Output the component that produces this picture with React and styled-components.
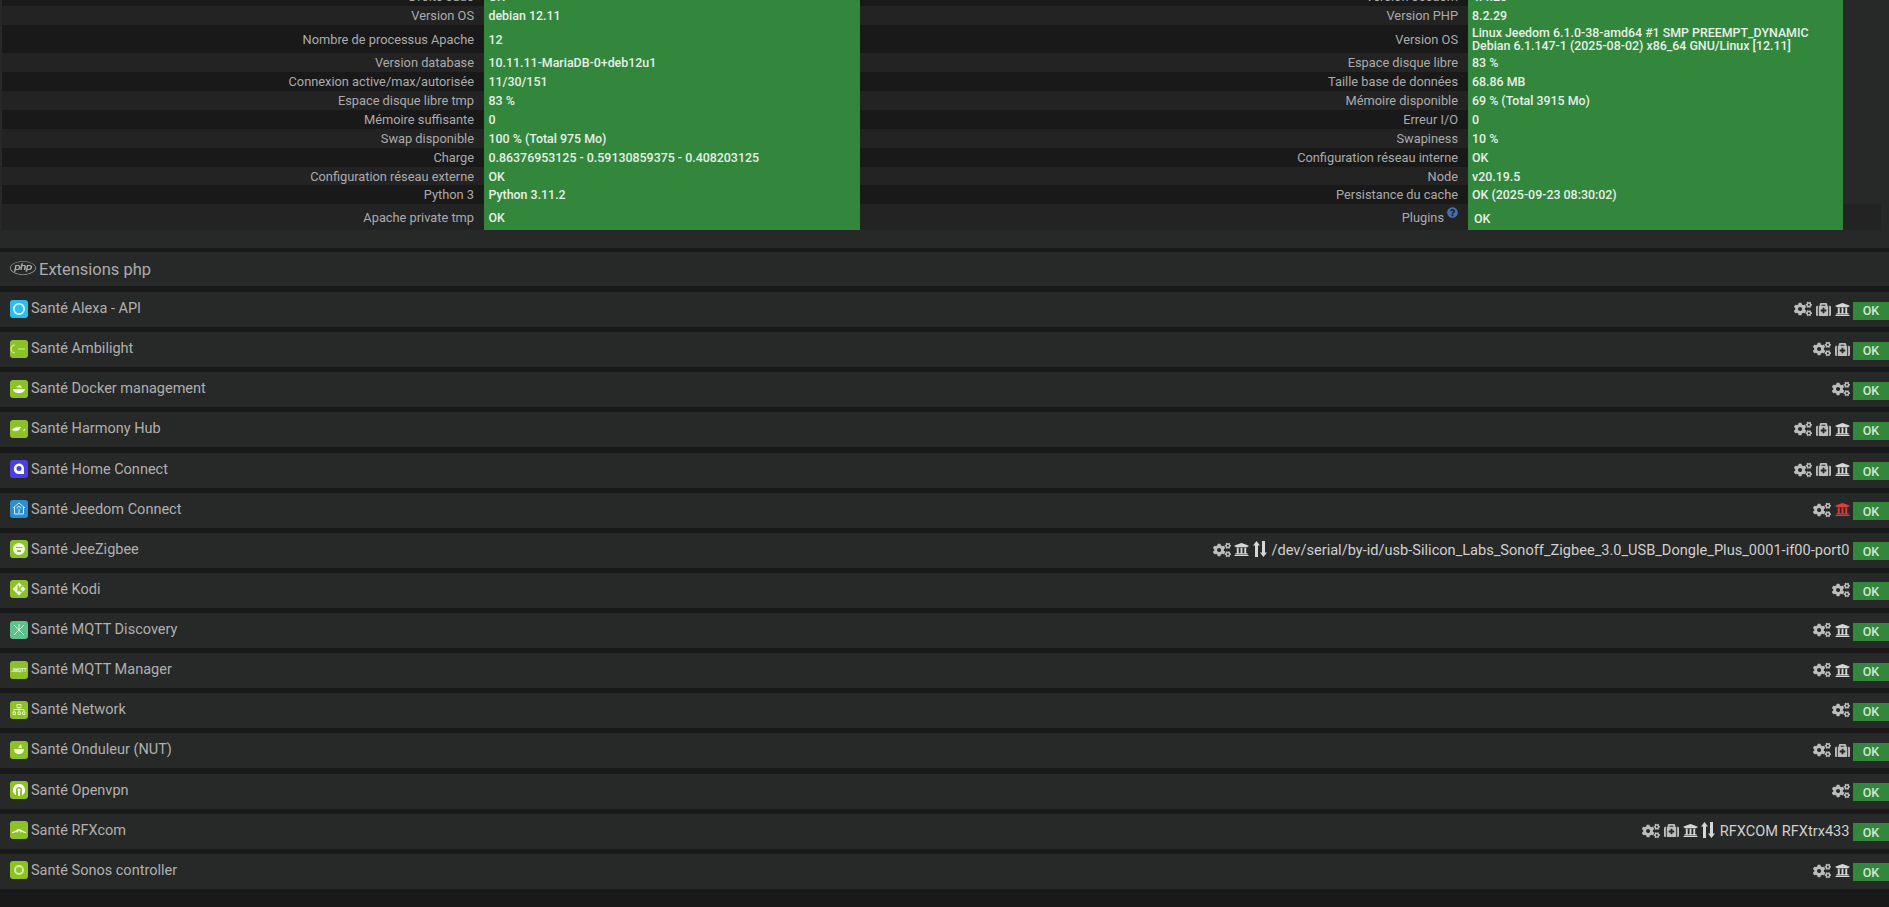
import React from "react";
import styled, { createGlobalStyle } from "styled-components";
import { FaCogs, FaMedkit, FaUniversity, FaPhp, FaQuestionCircle } from "react-icons/fa";

const Global = createGlobalStyle`
  html, body { margin: 0; padding: 0; background: #191919; }
  body { font-family: Roboto, "Liberation Sans", sans-serif; height: 907px; overflow: hidden; }
`;

const Page = styled.div`
  height: 907px;
  overflow: hidden;
  background: #191919;
  display: flex;
  flex-direction: column;
`;

// the first row of the table is scrolled out of the top of the page
const TopPanel = styled.div`
  flex: none;
  height: 261px;
  margin-top: -13px;
  margin-bottom: 4px;
  padding-left: 2px;
  box-sizing: border-box;
  background: #272928;
`;

const Line = styled.div`
  display: grid;
  grid-template-columns: 482px 376px 608px 375px ${(p) => (p.$last ? "38px" : "")};
  width: ${(p) => (p.$last ? 1879 : 1841)}px;
  height: ${(p) => p.$height}px;
  background: ${(p) => (p.$odd ? "#191919" : "#232323")};
`;

const Label = styled.div`
  display: flex;
  align-items: center;
  justify-content: flex-end;
  padding-right: 10px;
  color: #ababab;
  font-size: 12.8px;
`;

const Value = styled.div`
  display: flex;
  align-items: center;
  background: #32873d;
  color: #e8f0e8;
  font-size: 12.4px;
  font-weight: 500;
  line-height: 13px;
  white-space: pre-line;
  padding-left: ${(p) => p.$pad}px;
  padding-top: ${(p) => p.$top || 0}px;
  box-sizing: border-box;
`;

const Help = styled.span`
  display: inline-flex;
  color: #4170b4;
  font-size: 11px;
  margin-left: 3px;
  margin-bottom: 9px;
`;

const Section = styled.div`
  flex: none;
  height: 34px;
  margin-bottom: 6px;
  background: #272928;
  display: flex;
  align-items: center;
  gap: 3px;
  padding-left: 10px;
  padding-top: 1px;
  box-sizing: border-box;
  color: #ababab;
  font-size: 16.5px;
`;

const PhpIcon = styled(FaPhp)`
  margin-bottom: 4px;
`;

const Rows = styled.div`
  display: flex;
  flex-direction: column;
  gap: 5.14px;
`;

const Row = styled.div`
  flex: none;
  height: 35px;
  background: #272928;
  display: flex;
  align-items: center;
  padding-left: 10px;
`;

const Logo = styled.svg`
  width: 18px;
  height: 18px;
  flex: none;
  margin-right: 3px;
  margin-bottom: 2px;
`;

const Name = styled.div`
  flex: 1;
  color: #b0b0b0;
  font-size: 14.5px;
  margin-bottom: 2px;
`;

const Tools = styled.div`
  display: flex;
  align-items: center;
  gap: 3.6px;
  margin-right: 3.5px;
  margin-bottom: 1px;
`;

const Tool = styled.span`
  display: inline-flex;
  color: ${(p) => p.$color || "#bcbcbc"};
  font-size: ${(p) => p.$size || 15}px;
`;

const ArrowsIcon = styled.svg`
  width: 14px;
  height: 16px;
  margin-bottom: 1px;
`;

const Port = styled.span`
  color: #cfcfcf;
  font-size: 14.6px;
  margin-left: 1px;
`;

const Ok = styled.div`
  flex: none;
  width: 36px;
  height: 18px;
  margin-top: 2px;
  background: #32873d;
  color: #d4e6d4;
  font-size: 12.5px;
  font-weight: 500;
  display: flex;
  align-items: center;
  justify-content: center;
`;

const lines = [
  { h: 19, a: "Droits sudo", b: "OK", c: "Version Jeedom", d: "4.4.20" },
  { h: 19, a: "Version OS", b: "debian 12.11", c: "Version PHP", d: "8.2.29" },
  {
    h: 28,
    a: "Nombre de processus Apache",
    b: "12",
    c: "Version OS",
    d: "Linux Jeedom 6.1.0-38-amd64 #1 SMP PREEMPT_DYNAMIC\nDebian 6.1.147-1 (2025-08-02) x86_64 GNU/Linux [12.11]",
  },
  { h: 19, a: "Version database", b: "10.11.11-MariaDB-0+deb12u1", c: "Espace disque libre", d: "83 %" },
  { h: 19, a: "Connexion active/max/autorisée", b: "11/30/151", c: "Taille base de données", d: "68.86 MB" },
  { h: 19, a: "Espace disque libre tmp", b: "83 %", c: "Mémoire disponible", d: "69 % (Total 3915 Mo)" },
  { h: 19, a: "Mémoire suffisante", b: "0", c: "Erreur I/O", d: "0" },
  { h: 19, a: "Swap disponible", b: "100 % (Total 975 Mo)", c: "Swapiness", d: "10 %" },
  { h: 19, a: "Charge", b: "0.86376953125 - 0.59130859375 - 0.408203125", c: "Configuration réseau interne", d: "OK" },
  { h: 18, a: "Configuration réseau externe", b: "OK", c: "Node", d: "v20.19.5" },
  { h: 19, a: "Python 3", b: "Python 3.11.2", c: "Persistance du cache", d: "OK (2025-09-23 08:30:02)" },
  { h: 26, a: "Apache private tmp", b: "OK", c: "Plugins", d: "OK" },
];

const GREEN = "#8cc226";

function Mark({ kind }) {
  switch (kind) {
    case "alexa":
      return <circle cx="9" cy="9" r="5.2" fill="none" stroke="#eafaff" strokeWidth="1.6" />;
    case "ambi":
      return <path d="M5 5a4 4 0 0 0 0 8M8 9h7" fill="none" stroke="#d8f0a8" strokeWidth="1.2" />;
    case "docker":
      return <path d="M3 9h12c-.5 3-3 4-6 4S3.500 12 3 9zM6 7l4-2 2 3z" fill="#fff" />;
    case "harmony":
      return <path d="M2 10c3-3 7-3 9-3l-2 3c-2 1-5 1-7 0zM13 10l1 1 1.500-2" fill="#fff" stroke="#fff" strokeWidth=".4" />;
    case "home":
      return <path d="M9 3.500a5 5 0 0 1 5 5V14H9a5 5 0 0 1 0-10.500zM9 6a2.500 2.500 0 1 0 0 5 2.500 2.500 0 0 0 0-5z" fill="#fff" fillRule="evenodd" />;
    case "connect":
      return <path d="M3 8l6-5 6 5M4.500 7v7h9V7M9 13V9M7 8.500a2 2 0 0 1 4 0" fill="none" stroke="#d6eefc" strokeWidth="1" />;
    case "zigbee":
      return <path d="M9 3a6 6 0 1 1 0 12A6 6 0 0 1 9 3zM6 7v1h6V7zM7 10v2h4v-2z" fill="#f2f8e0" fillRule="evenodd" />;
    case "kodi":
      return <path d="M9 2.500L15.500 9 9 15.500 2.500 9zM7.500 5.500v7l1.500-2 2.500 2 1-1L10 9l2.500-2.500-1-1L9 8V5.500z" fill="#f2f8e0" fillRule="evenodd" />;
    case "discovery":
      return <path d="M4 4l5 5 5-5M9 9l-5 5M9 9l5 5M9 3v6" fill="none" stroke="#d8f5e0" strokeWidth="1" />;
    case "manager":
      return (
        <text x="9" y="10.500" fontSize="4.500" fontWeight="700" fill="#f2f8e0" textAnchor="middle">
          JMQTT
        </text>
      );
    case "network":
      return <path d="M7 3.500h4v3H7zM9 6.500v2M4 8.500h10M4 8.500V11M14 8.500V11M9 8.500V11M3 11h2.500v2.500H3zM8 11h2.500v2.500H8zM12.500 11H15v2.500h-2.500z" fill="none" stroke="#e4f4c0" strokeWidth="1" />;
    case "nut":
      return <path d="M4 8h10c0 3-2 5-5 5s-5-2-5-5zM8 7l3-4 1 4z" fill="#f2f8e0" />;
    case "vpn":
      return <path d="M9 3a6 6 0 0 1 3 11.200V9a3 3 0 1 0-6 0v5.200A6 6 0 0 1 9 3zM9 7.500a1.500 1.500 0 0 1 1 2.600V15H8v-4.900A1.500 1.500 0 0 1 9 7.500z" fill="#fff" fillRule="evenodd" />;
    case "rfx":
      return <path d="M2 11.500c2 0 3-.5 4-1.500a4 4 0 0 1 6 0c1 1 2 1.500 4 1.500M7 11.500a2 2 0 0 1 4 0" fill="none" stroke="#f2f8e0" strokeWidth="1.200" />;
    case "sonos":
      return <circle cx="9" cy="9" r="4" fill="none" stroke="#d4eba0" strokeWidth="2" />;
    default:
      return null;
  }
}

function PluginLogo({ kind, color }) {
  return (
    <Logo viewBox="0 0 18 18">
      <rect width="18" height="18" rx="3" fill={color || GREEN} />
      <Mark kind={kind} />
    </Logo>
  );
}

const plugins = [
  { name: "Alexa - API", kind: "alexa", color: "#2bbdf2", med: true, bank: true },
  { name: "Ambilight", kind: "ambi", med: true },
  { name: "Docker management", kind: "docker" },
  { name: "Harmony Hub", kind: "harmony", med: true, bank: true },
  { name: "Home Connect", kind: "home", color: "#4a3fe0", med: true, bank: true },
  { name: "Jeedom Connect", kind: "connect", color: "#2a8fd0", bank: true, red: true },
  { name: "JeeZigbee", kind: "zigbee", bank: true, arrows: true, port: "/dev/serial/by-id/usb-Silicon_Labs_Sonoff_Zigbee_3.0_USB_Dongle_Plus_0001-if00-port0" },
  { name: "Kodi", kind: "kodi" },
  { name: "MQTT Discovery", kind: "discovery", color: "#5cc38a", bank: true },
  { name: "MQTT Manager", kind: "manager", bank: true },
  { name: "Network", kind: "network" },
  { name: "Onduleur (NUT)", kind: "nut", med: true },
  { name: "Openvpn", kind: "vpn" },
  { name: "RFXcom", kind: "rfx", med: true, bank: true, arrows: true, port: "RFXCOM RFXtrx433" },
  { name: "Sonos controller", kind: "sonos", bank: true },
];

export default function App() {
  return (
    <Page>
      <Global />
      <TopPanel>
        {lines.map((l, i) => {
          const last = i === lines.length - 1;
          return (
            <Line key={l.a} $odd={i % 2 === 0} $height={l.h} $last={last}>
              <Label>{l.a}</Label>
              <Value $pad={4.5}>{l.b}</Value>
              <Label>
                {l.c}
                {last && (
                  <Help>
                    <FaQuestionCircle />
                  </Help>
                )}
              </Label>
              <Value $pad={last ? 6 : 4} $top={last ? 2 : 0}>
                {l.d}
              </Value>
            </Line>
          );
        })}
      </TopPanel>
      <Section>
        <PhpIcon size={26} />
        Extensions php
      </Section>
      <Rows>
        {plugins.map((p) => (
          <Row key={p.name}>
            <PluginLogo kind={p.kind} color={p.color} />
            <Name>Santé {p.name}</Name>
            <Tools>
              <Tool $size={18}>
                <FaCogs />
              </Tool>
              {p.med && (
                <Tool>
                  <FaMedkit />
                </Tool>
              )}
              {p.bank && (
                <Tool $color={p.red ? "#e23b3b" : "#d6d6d6"}>
                  <FaUniversity />
                </Tool>
              )}
              {p.arrows && (
                <Tool $color="#d6d6d6">
                  <ArrowsIcon viewBox="0 0 14 16">
                    <path d="M3.500 0L7 4.500H5V16H2V4.500H0zM10.500 16L7 11.500h2V0h3v11.500h2z" fill="currentColor" />
                  </ArrowsIcon>
                </Tool>
              )}
              {p.port && <Port>{p.port}</Port>}
            </Tools>
            <Ok>OK</Ok>
          </Row>
        ))}
      </Rows>
    </Page>
  );
}
